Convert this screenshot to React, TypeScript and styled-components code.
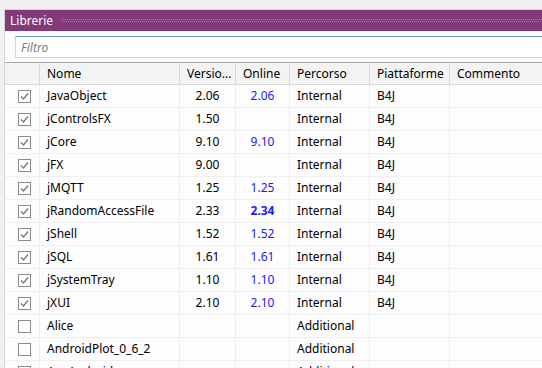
import React from "react";
import styled, { createGlobalStyle } from "styled-components";

const GlobalStyle = createGlobalStyle`
    html, body {
        margin: 0;
        padding: 0;
        background: #f0f0f0;
        overflow: hidden;
    }
    body {
        font-family: "Noto Sans", "Open Sans", sans-serif;
        font-size: 12px;
        color: #000;
    }
`;

type Lib = {
    name: string;
    checked: boolean;
    version?: string;
    online?: string;
    newer?: boolean;
    path: string;
    platform?: string;
};

const LIBS: Lib[] = [
    { name: "JavaObject", checked: true, version: "2.06", online: "2.06", path: "Internal", platform: "B4J" },
    { name: "jControlsFX", checked: true, version: "1.50", path: "Internal", platform: "B4J" },
    { name: "jCore", checked: true, version: "9.10", online: "9.10", path: "Internal", platform: "B4J" },
    { name: "jFX", checked: true, version: "9.00", path: "Internal", platform: "B4J" },
    { name: "jMQTT", checked: true, version: "1.25", online: "1.25", path: "Internal", platform: "B4J" },
    { name: "jRandomAccessFile", checked: true, version: "2.33", online: "2.34", newer: true, path: "Internal", platform: "B4J" },
    { name: "jShell", checked: true, version: "1.52", online: "1.52", path: "Internal", platform: "B4J" },
    { name: "jSQL", checked: true, version: "1.61", online: "1.61", path: "Internal", platform: "B4J" },
    { name: "jSystemTray", checked: true, version: "1.10", online: "1.10", path: "Internal", platform: "B4J" },
    { name: "jXUI", checked: true, version: "2.10", online: "2.10", path: "Internal", platform: "B4J" },
    { name: "Alice", checked: false, path: "Additional" },
    { name: "AndroidPlot_0_6_2", checked: false, path: "Additional" },
    { name: "AnyAndroid", checked: false, path: "Additional" },
];

const COLS = "35px 140px 56px 54px 80px 80px 1fr";

export default function App() {
    return (
        <>
            <GlobalStyle />
            <Window>
                <Panel>
                    <TitleBar>
                        <Title>Librerie</Title>
                        <Dots />
                    </TitleBar>
                    <FilterArea>
                        <FilterInput placeholder="Filtro" />
                    </FilterArea>
                    <Table>
                        <HeaderRow>
                            <HeadCell />
                            <HeadCell>Nome</HeadCell>
                            <HeadCell>Versio...</HeadCell>
                            <HeadCell>Online</HeadCell>
                            <HeadCell>Percorso</HeadCell>
                            <HeadCell>Piattaforme</HeadCell>
                            <HeadCell>Commento</HeadCell>
                        </HeaderRow>
                        {LIBS.map((lib) => (
                            <Row key={lib.name}>
                                <CheckCell>
                                    <CheckBox>
                                        {lib.checked && (
                                            <svg width="11" height="11" viewBox="0 0 11 11">
                                                <path d="M2 5.5 L4.5 8 L9 2.5" fill="none" stroke="#7a7a7a" strokeWidth="1.4" />
                                            </svg>
                                        )}
                                    </CheckBox>
                                </CheckCell>
                                <Cell>{lib.name}</Cell>
                                <Cell $center>{lib.version}</Cell>
                                <OnlineCell $bold={lib.newer}>{lib.online}</OnlineCell>
                                <Cell>{lib.path}</Cell>
                                <Cell>{lib.platform}</Cell>
                                <Cell />
                            </Row>
                        ))}
                    </Table>
                </Panel>
            </Window>
        </>
    );
}

const Window = styled.div`
    width: 542px;
    height: 368px;
    padding: 9px 0 0 4px;
    box-sizing: border-box;
    overflow: hidden;
    background: #f0f0f0;
`;

const Panel = styled.div`
    border-left: 1px solid #d4d4d4;
    border-top: 1px solid #d4d4d4;
    background: #ffffff;
    height: 100%;
    display: flex;
    flex-direction: column;
`;

const TitleBar = styled.div`
    height: 21px;
    background: #823a79;
    display: flex;
    align-items: center;
    padding-left: 5px;
    gap: 8px;
`;

const Title = styled.span`
    color: #ffffff;
    font-size: 12px;
    line-height: 21px;
`;

const Dots = styled.div`
    flex: 1;
    height: 4px;
    margin-top: 1px;
    background-image:
        radial-gradient(circle at 0.5px 0.5px, rgba(255, 255, 255, 0.3) 0.5px, transparent 0.6px),
        radial-gradient(circle at 1.5px 2.5px, rgba(255, 255, 255, 0.3) 0.5px, transparent 0.6px);
    background-size: 2px 4px;
`;

const FilterArea = styled.div`
    padding: 5px 0 4px 10px;
    background: #fbfbfb;
`;

const FilterInput = styled.input`
    width: 100%;
    height: 22px;
    box-sizing: border-box;
    border: 1px solid #c5d6e6;
    border-top-color: #6f98bd;
    border-right: none;
    padding: 0 5px;
    font-family: "Noto Sans", "Open Sans", sans-serif;
    font-size: 12px;
    outline: none;
    &::placeholder {
        color: #7d7d7d;
        font-style: italic;
    }
`;

const Table = styled.div`
    border-top: 1px solid #a8a8a8;
    flex: 1;
    overflow: hidden;
`;

const HeaderRow = styled.div`
    display: grid;
    grid-template-columns: ${COLS};
    height: 21px;
    background: #f3f3f3;
    border-bottom: 1px solid #d8d8d8;
`;

const HeadCell = styled.div`
    border-right: 1px solid #d8d8d8;
    padding-left: 7px;
    line-height: 21px;
    white-space: nowrap;
    overflow: hidden;
    &:last-child {
        border-right: none;
    }
`;

const Row = styled.div`
    display: grid;
    grid-template-columns: ${COLS};
    height: 22px;
    border-bottom: 1px solid #f0f0f0;
    background: #fdfdfd;
`;

const Cell = styled.div<{ $center?: boolean }>`
    border-right: 1px solid #efefef;
    padding-left: ${(p) => (p.$center ? "0" : "7px")};
    text-align: ${(p) => (p.$center ? "center" : "left")};
    line-height: 22px;
    white-space: nowrap;
    overflow: hidden;
    &:last-child {
        border-right: none;
    }
`;

const OnlineCell = styled(Cell).attrs({ $center: true })<{ $bold?: boolean }>`
    color: #1a1aff;
    font-weight: ${(p) => (p.$bold ? 700 : 400)};
`;

const CheckCell = styled.div`
    border-right: 1px solid #efefef;
    display: flex;
    align-items: center;
    justify-content: center;
`;

const CheckBox = styled.div`
    width: 13px;
    height: 13px;
    box-sizing: border-box;
    border: 1px solid #8a8a8a;
    background: #ffffff;
    display: flex;
    align-items: center;
    justify-content: center;
    margin-left: 4px;
`;
